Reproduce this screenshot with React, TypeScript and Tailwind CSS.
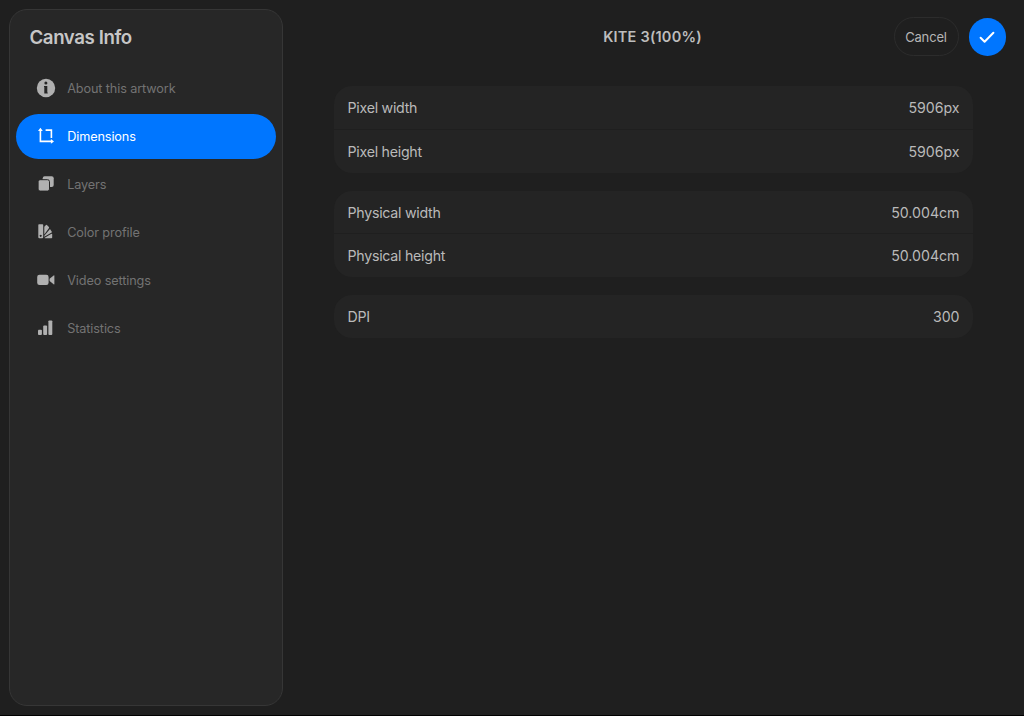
import type { ReactNode } from "react";
import clsx from "clsx";

function Icon({ children }: { children: ReactNode }) {
  return (
    <svg viewBox="0 0 20 20" className="size-5 shrink-0" fill="currentColor">
      {children}
    </svg>
  );
}

const links = [
  {
    label: "About this artwork",
    icon: (
      <Icon>
        <circle cx="10" cy="10" r="9.2" />
        <g fill="#262626">
          <circle cx="9.9" cy="4.9" r="1.5" />
          <path d="M8 7.9h3.3v6.5h.4v1.1H8.3V9H8z" />
        </g>
      </Icon>
    ),
  },
  {
    label: "Dimensions",
    icon: (
      <Icon>
        <g fill="none" stroke="currentColor" strokeWidth="1.6">
          <path d="M4.4 4v11.4h11.4M9.6 4.1h5.8v8" />
        </g>
        <path d="M4.4 1.8 6.8 4.9H2zM18 15.4l-3.1 2.4V13z" />
      </Icon>
    ),
  },
  {
    label: "Layers",
    icon: (
      <Icon>
        <rect x="6.7" y="2.3" width="11" height="10.8" rx="2" />
        <rect x="2.1" y="5.7" width="11.4" height="11.4" rx="2" stroke="#262626" />
      </Icon>
    ),
  },
  {
    label: "Color profile",
    icon: (
      <Icon>
        <path
          fillRule="evenodd"
          d="M3 2.3h3.5q.7 0 .7.7v12.2q0 1.1-1.1 1.1H3.4q-1.1 0-1.1-1.1V3q0-.7.7-.7zM4.7 12.7a1 1 0 1 0 .01 0z"
        />
        <path d="M8.3 4.7 10 3q.5-.4.9.1l2 2q.4.5.1.9l-4.7 6.5z" />
        <path d="m14 7 1.8 2.8q.3.5-.2.8l-7.3 4.1v-.9z" />
        <path d="M15.5 11.8q.7 0 .7.7v3.1q0 .7-.7.7H8.7v-.5z" />
      </Icon>
    ),
  },
  {
    label: "Video settings",
    icon: (
      <Icon>
        <rect x="1.2" y="4.7" width="11.4" height="10.3" rx="2.3" />
        <path d="m13.6 8.7 4-3.2q.8-.5.8.4v7.9q0 .9-.8.4l-4-3.2z" />
      </Icon>
    ),
  },
  {
    label: "Statistics",
    icon: (
      <Icon>
        <rect x="2" y="11.7" width="3.9" height="5.2" rx=".9" />
        <rect x="7.2" y="7.5" width="3.9" height="9.4" rx=".9" />
        <rect x="12.4" y="2.4" width="3.9" height="14.5" rx=".9" />
      </Icon>
    ),
  },
];

const groups = [
  [
    { label: "Pixel width", value: "5906px" },
    { label: "Pixel height", value: "5906px" },
  ],
  [
    { label: "Physical width", value: "50.004cm" },
    { label: "Physical height", value: "50.004cm" },
  ],
  [{ label: "DPI", value: "300" }],
];

function Sidebar() {
  return (
    <aside className="mt-[9px] ml-[9px] h-[697px] w-[274px] shrink-0 rounded-[18px] border border-[#363636] bg-[#272727] px-1.5">
      <h1 className="mt-[14px] ml-[13.5px] text-[18.7px] leading-7 font-semibold tracking-[-0.42px] text-[#c6c6c6]">
        Canvas Info
      </h1>
      <nav className="mt-[14px] flex flex-col gap-[3.5px]">
        {links.map((link) => {
          const active = link.label === "Dimensions";
          return (
            <a
              key={link.label}
              className={clsx(
                "flex h-[44.5px] items-center gap-[11.5px] rounded-full pl-[19.7px] text-[12.7px] tracking-[-0.12px]",
                active ? "bg-[#0076ff] text-white" : "text-[#b0b0b0]"
              )}
            >
              {link.icon}
              <span className={clsx("pt-px whitespace-nowrap", !active && "text-[#737373]")}>{link.label}</span>
            </a>
          );
        })}
      </nav>
    </aside>
  );
}

function Group({ rows }: { rows: { label: string; value: string }[] }) {
  return (
    <div className="overflow-hidden rounded-[18px] bg-[#242424]">
      {rows.map((row, i) => (
        <div
          key={row.label}
          className={clsx(
            "flex items-center justify-between pt-[0.9px] pr-[13.5px] pl-3.5 text-[14.2px] text-[#bababa]",
            i > 0 ? "h-11 border-t border-[#1f1f1f]" : "h-[42.5px]"
          )}
        >
          <span className="tracking-[-0.26px]">{row.label}</span>
          <span className="tracking-[-0.03px]">{row.value}</span>
        </div>
      ))}
    </div>
  );
}

export default function App() {
  return (
    <div className="flex h-[716px] w-[1024px] overflow-hidden border-b border-black bg-[#1f1f1f] font-['Inter',sans-serif]">
      <Sidebar />
      <main className="min-w-0 flex-1">
        <header className="mt-[17px] grid h-[39px] grid-cols-[1fr_auto_1fr] items-center pr-[18px] pl-[16px]">
          <h2 className="col-start-2 text-[14.5px] font-semibold tracking-[0.22px] text-[#bdbdbd]">KITE 3(100%)</h2>
          <div className="flex items-center justify-end gap-2.5">
            <button className="h-[39px] w-[65px] rounded-[20px] border border-[#2c2c2c] pt-0.5 text-[13px] tracking-[-0.15px] text-[#b5b5b5]">
              Cancel
            </button>
            <button className="mt-px flex size-[37.5px] items-center justify-center rounded-full bg-[#0076ff]">
              <svg viewBox="0 0 18 18" className="size-[18px]" fill="none" stroke="#fff" strokeWidth="2">
                <path d="m2.6 9.8 4 4 8.8-9" strokeLinecap="round" strokeLinejoin="round" />
              </svg>
            </button>
          </div>
        </header>
        <section className="mt-[30px] mr-[51px] ml-[50.5px] flex flex-col gap-[18px]">
          {groups.map((rows) => (
            <Group key={rows[0].label} rows={rows} />
          ))}
        </section>
      </main>
    </div>
  );
}
